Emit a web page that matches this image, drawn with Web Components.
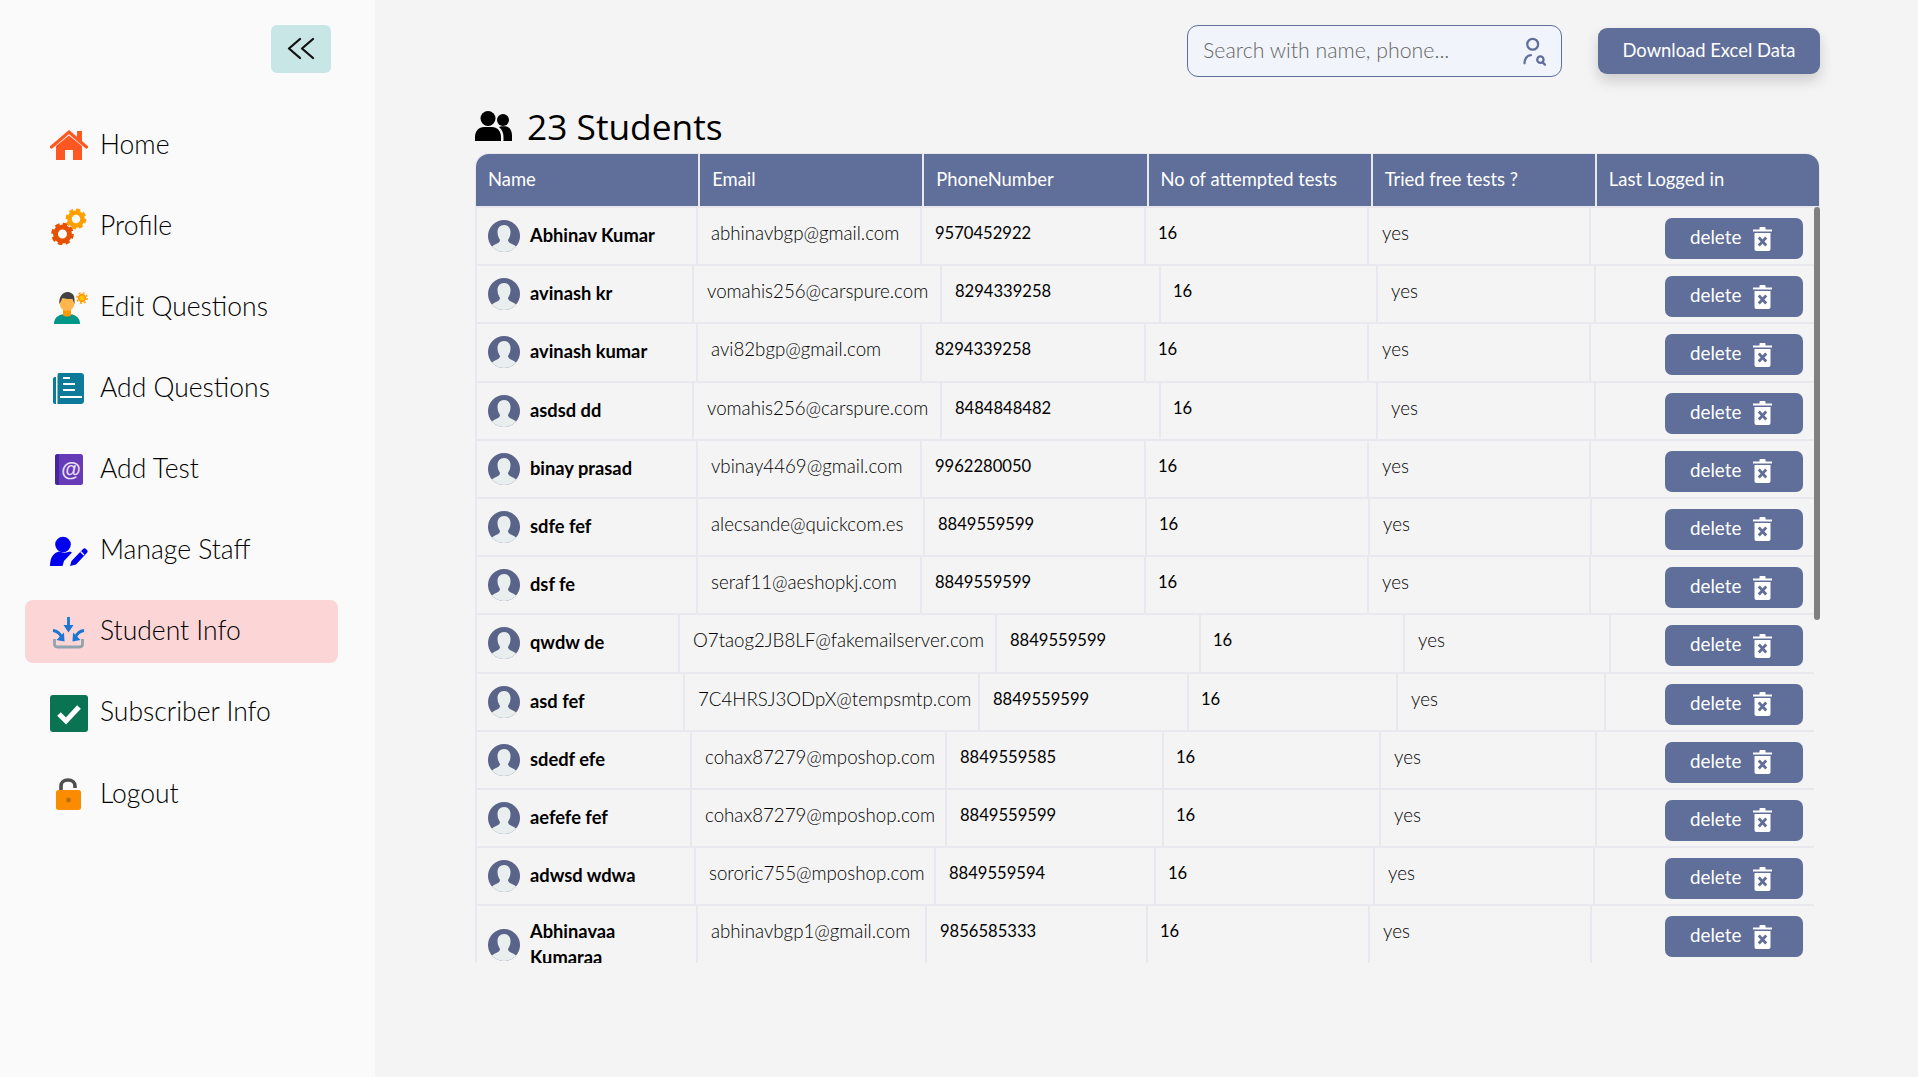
<!DOCTYPE html>
<html lang="en">
<head>
<meta charset="utf-8">
<title>Student Info</title>
<style>
    html, body { margin: 0; height: 100%; }
    body { font-family: "Lato", "Open Sans", sans-serif; background: #f4f4f4; overflow: hidden; }
</style>
</head>
<body>
<admin-app></admin-app>
<script>
const ICONS = {
    home: `<path fill="#ff5722" d="M6 20 19 9.500 32 20v14H23V24H15V34H6z"/><path fill="#ff5722" d="M27 5h5v12l-5-4z"/><path fill="none" stroke="#ff5722" stroke-width="3.200" stroke-linecap="round" d="M1.500 21 19 6 36.500 21"/>`,
    gears: `<g fill="none"><circle cx="26" cy="12" r="6.500" stroke="#ffa000" stroke-width="4.500"/><circle cx="26" cy="12" r="9.200" stroke="#ffa000" stroke-width="2.400" stroke-dasharray="4.200 3"/><circle cx="12.500" cy="27" r="7" stroke="#e65100" stroke-width="5"/><circle cx="12.500" cy="27" r="10" stroke="#e65100" stroke-width="2.600" stroke-dasharray="4.600 3.250"/></g>`,
    person: `<path fill="#009688" d="M4 36c0-7 5-10 13-10s13 3 13 10z"/><path fill="#ff9800" d="M13 20h8v7c-1 2-7 2-8 0z"/><ellipse cx="17" cy="15" rx="7.500" ry="8" fill="#ffb74d"/><path fill="#424242" d="M9.500 16c-1-7 3-12 8-12 3 0 7 2 7 7v5l-2-5c-3 0-7 0-10-1z"/><circle cx="32" cy="10" r="3.400" fill="#ffc107" stroke="#ff9800" stroke-width="1.600"/><circle cx="32" cy="10" r="5.200" fill="none" stroke="#ff9800" stroke-width="1.400" stroke-dasharray="2 2.080"/>`,
    book: `<path fill="#0e7a9a" d="M6 8v27H5c-1.200 0-2-.8-2-2V10c0-1.200.8-2 1.800-2zM9 4h22c1.800 0 3 1.200 3 3v25c0 1.800-1.200 3-3 3H7.500V7C7.500 5 8 4 9 4z"/><path stroke="#fff" stroke-width="2" d="M13 9h7M13 15h12M13 21h12M10 28h22"/>`,
    mail: `<rect x="5" y="4" width="28" height="31" rx="2.500" fill="#673ab7"/><path fill="#4527a0" d="M5 6.500C5 5 6 4 9 4v31c-3 0-4-1-4-2.500z"/><text x="21" y="26" font-family="Liberation Sans, sans-serif" font-size="20" font-weight="700" fill="#e8e0f5" text-anchor="middle">@</text>`,
    staff: `<g fill="#0000ee"><circle cx="13" cy="13.500" r="7.800"/><path d="M0 35c0-8 3-13 9-14.500 4 1.500 7 1.500 11 0l2 1-8 8.500-1.500 5z"/><path d="M20 35l1.500-5 11.500-12c1-1 2-1 3 0l1 1c1 1 .8 2-.2 3L26 33.500z"/></g><path d="M30.500 20.500l3.500 3.500" stroke="#fafafa" stroke-width="1.200"/>`,
    inbox: `<path fill="none" stroke="#90a4ae" stroke-width="2.800" stroke-linejoin="round" d="M4.500 26v5c0 2 1 3 3 3h22c2 0 3-1 3-3v-5"/><g fill="none" stroke="#1976d2" stroke-width="2.800"><path d="M18.500 4v12M3 17.500c4 .5 7 2.500 9 7.500M34 17.500c-4 .5-7 2.500-9 7.500"/></g><g fill="#1976d2"><path d="M13.500 12h10l-5 7.500z"/><path d="M14.500 28.500 14 19.500 6.500 27z"/><path d="M22.500 28.500 23 19.500 30.500 27z"/></g>`,
    check: `<rect y="1" width="38" height="37" rx="3" fill="#0a7352"/><path fill="none" stroke="#fff" stroke-width="5" d="M9 20l7 7 13-14"/>`,
    lock: `<path fill="none" stroke="#4e4e4e" stroke-width="3.600" d="M11 17V11c0-3.500 3-6 7-6s7 2.500 7 6v2"/><rect x="6" y="15" width="25" height="20" rx="2.500" fill="#fb8c00"/><circle cx="18.500" cy="25" r="2.200" fill="#b86a10"/>`
};

class NavItem extends HTMLElement {
    constructor() {
        super();
        this.shadowDOM = this.attachShadow({mode: 'open'});
    }
    connectedCallback() {
        const active = this.hasAttribute('active');
        this.shadowDOM.innerHTML = `
            <style>
            :host { display: block; }
            .item {
                display: flex;
                align-items: center;
                gap: 12px;
                height: 63px;
                padding-left: 25px;
                border-radius: 8px;
                background: ${active ? '#fcd6d6' : 'transparent'};
                font-size: 26.500px;
                font-weight: 300;
                color: #000;
                cursor: pointer;
            }
            svg { width: 38px; height: 38px; flex: none; }
            span { padding-bottom: 2.400px; }
            </style>
            <div class="item">
                <svg viewBox="0 0 38 38">${ICONS[this.getAttribute('icon')]}</svg>
                <span><slot></slot></span>
            </div>`;
    }
}

class SideBar extends HTMLElement {
    constructor() {
        super();
        this.shadowDOM = this.attachShadow({mode: 'open'});
    }
    connectedCallback() {
        this.shadowDOM.innerHTML = `
            <style>
            :host {
                display: block;
                flex: none;
                width: 375px;
                height: 100%;
                box-sizing: border-box;
                padding: 25px 37px 0 25px;
                background: #fafafa;
            }
            .collapse {
                display: flex;
                align-items: center;
                justify-content: center;
                width: 60px;
                height: 48px;
                margin-left: 246px;
                border-radius: 6px;
                background: #c8e6e5;
            }
            nav {
                display: flex;
                flex-direction: column;
                gap: 18.100px;
                margin-top: 40.500px;
            }
            </style>
            <div class="collapse">
                <svg width="28" height="24" viewBox="0 0 28 24" fill="none" stroke="#111" stroke-width="2.300" stroke-linecap="round" stroke-linejoin="round"><path d="M13 2 2 11.500 13 21M26 2 15 11.500 26 21"/></svg>
            </div>
            <nav><slot></slot></nav>`;
    }
}

class SearchBox extends HTMLElement {
    constructor() {
        super();
        this.shadowDOM = this.attachShadow({mode: 'open'});
    }
    connectedCallback() {
        this.shadowDOM.innerHTML = `
            <style>
            :host {
                display: flex;
                align-items: center;
                justify-content: space-between;
                box-sizing: border-box;
                width: 375px;
                height: 52px;
                padding: 0 14px 0 15px;
                border: 1.500px solid #5f6f9a;
                border-radius: 11px;
                background: #f1f5fb;
                font-size: 21.300px;
                font-weight: 300;
                color: #666;
            }
            span { padding-bottom: 3px; }
            </style>
            <span><slot></slot></span>
            <svg width="25" height="29" viewBox="0 0 26 32" fill="none" stroke="#5f6f9a" stroke-width="2.500" stroke-linecap="round">
                <circle cx="11" cy="8" r="6"/>
                <path d="M2 29c0-5 3-9 7-9"/>
                <circle cx="19.500" cy="25" r="3.500"/>
                <path d="M22 28l2.500 2.500"/>
            </svg>`;
    }
}

class ExcelButton extends HTMLElement {
    constructor() {
        super();
        this.shadowDOM = this.attachShadow({mode: 'open'});
    }
    connectedCallback() {
        this.shadowDOM.innerHTML = `
            <style>
            :host {
                display: flex;
                align-items: center;
                justify-content: center;
                box-sizing: border-box;
                width: 222px;
                height: 46px;
                padding-bottom: 2px;
                border-radius: 9px;
                background: #5f6f9a;
                box-shadow: 0 7px 14px rgba(0, 0, 0, .16);
                color: #fff;
                font-size: 18.400px;
                cursor: pointer;
            }
            </style>
            <slot></slot>`;
    }
}

class DeleteButton extends HTMLElement {
    constructor() {
        super();
        this.shadowDOM = this.attachShadow({mode: 'open'});
    }
    connectedCallback() {
        this.shadowDOM.innerHTML = `
            <style>
            :host {
                display: flex;
                align-items: center;
                gap: 12px;
                box-sizing: border-box;
                width: 138px;
                height: 41px;
                padding-left: 25px;
                border-radius: 7px;
                background: #5f6f9a;
                color: #fff;
                font-size: 18.800px;
                font-weight: 400;
                cursor: pointer;
            }
            span { padding-bottom: 3px; }
            </style>
            <span>delete</span>
            <svg width="19" height="24" viewBox="0 0 19 24">
                <path fill="#fff" d="M0 2.500h6.500V1c0-.6.4-1 1-1h4c.6 0 1 .4 1 1v1.500H19V4.500H0zM1.500 6h16v16c0 1.200-.8 2-2 2h-12c-1.200 0-2-.8-2-2z"/>
                <path stroke="#5f6f9a" stroke-width="2.800" d="M5.800 10.500l7.400 8M13.200 10.500l-7.400 8"/>
            </svg>`;
    }
}

class UserAvatar extends HTMLElement {
    constructor() {
        super();
        this.shadowDOM = this.attachShadow({mode: 'open'});
    }
    connectedCallback() {
        this.shadowDOM.innerHTML = `
            <style>:host { display: block; width: 32px; height: 32px; flex: none; }</style>
            <svg width="32" height="32" viewBox="0 0 32 32">
                <clipPath id="c"><circle cx="16" cy="16" r="16"/></clipPath>
                <g clip-path="url(#c)">
                    <rect width="32" height="32" fill="#5a6488"/>
                    <path fill="#e9eeee" d="M16 5c4 0 6.500 3 6.500 7 0 4-1.500 6-2.500 8 0 2 2 3.500 6 5l4 3-4 4H6l-4-4 4-3c4-1.500 6-3 6-5-1-2-2.500-4-2.500-8 0-4 2.500-7 6.500-7z"/>
                </g>
            </svg>`;
    }
}

class StudentRow extends HTMLElement {
    constructor() {
        super();
        this.shadowDOM = this.attachShadow({mode: 'open'});
    }
    connectedCallback() {
        const widths = this.getAttribute('widths');
        const value = (name) => this.getAttribute(name);
        this.shadowDOM.innerHTML = `
            <style>
            :host {
                display: grid;
                grid-template-columns: ${widths} 1fr;
                min-height: 58.200px;
                box-sizing: border-box;
                border-left: 2px solid #e8e8ee;
                border-bottom: 2px solid #e8e8ee;
                font-size: 18.700px;
                font-weight: 300;
                color: #000;
            }
            .cell {
                box-sizing: border-box;
                padding: 13px 0 0 13px;
                border-right: 2px solid #e8e8ee;
                line-height: 24px;
                white-space: nowrap;
            }
            .name {
                display: flex;
                align-items: center;
                gap: 10px;
                padding: 0 0 0 11px;
                font-weight: 700;
                font-size: 18.300px;
                line-height: 26px;
                white-space: normal;
            }
            .name span { max-width: 130px; padding: 12px 0 14px; }
            .num { font-weight: 400; font-size: 16.600px; }
            .tries { padding-left: 12px; }
            .action {
                display: flex;
                justify-content: flex-end;
                padding: 10px 11px 0 0;
                border-right: 0;
            }
            </style>
            <div class="cell name"><user-avatar></user-avatar><span>${value('name')}</span></div>
            <div class="cell">${value('email')}</div>
            <div class="cell num">${value('phone')}</div>
            <div class="cell num tries">16</div>
            <div class="cell">yes</div>
            <div class="cell action"><delete-button></delete-button></div>`;
    }
}

class StudentTable extends HTMLElement {
    constructor() {
        super();
        this.shadowDOM = this.attachShadow({mode: 'open'});
    }
    connectedCallback() {
        const heads = ['Name', 'Email', 'PhoneNumber', 'No of attempted tests', 'Tried free tests ?', 'Last Logged in'];
        this.shadowDOM.innerHTML = `
            <style>
            :host { display: block; position: relative; }
            .head {
                display: grid;
                grid-template-columns: repeat(6, 1fr);
                gap: 2px;
                height: 52px;
                border-radius: 14px 14px 0 0;
                overflow: hidden;
                font-size: 18.400px;
                color: #fff;
                border: 1px solid #e8e8ee;
                border-bottom: 2px solid #e8e8ee;
                background: #e8e8ee;
            }
            .head div {
                display: flex;
                align-items: center;
                padding: 0 0 2px 12px;
                background: #5f6f9a;
            }
            .rows {
                height: 755px;
                margin-right: 6px;
                overflow: hidden;
            }
            .thumb {
                position: absolute;
                top: 54px;
                right: 0;
                width: 6px;
                height: 413px;
                border-radius: 3px;
                background: #808080;
            }
            </style>
            <div class="head">${heads.map((h) => `<div>${h}</div>`).join('')}</div>
            <div class="rows"><slot></slot></div>
            <div class="thumb"></div>`;
    }
}

class AdminApp extends HTMLElement {
    constructor() {
        super();
        this.shadowDOM = this.attachShadow({mode: 'open'});
    }
    connectedCallback() {
        const a = '221px 224px 224px 223px 222px';
        const b = '217px 248px 219px 217px 218px';
        const students = [
            ['Abhinav Kumar', 'abhinavbgp@gmail.com', '9570452922', a],
            ['avinash kr', 'vomahis256@carspure.com', '8294339258', b],
            ['avinash kumar', 'avi82bgp@gmail.com', '8294339258', a],
            ['asdsd dd', 'vomahis256@carspure.com', '8484848482', b],
            ['binay prasad', 'vbinay4469@gmail.com', '9962280050', a],
            ['sdfe fef', 'alecsande@quickcom.es', '8849559599', '221px 227px 222px 223px 222px'],
            ['dsf fe', 'seraf11@aeshopkj.com', '8849559599', a],
            ['qwdw de', 'O7taog2JB8LF@fakemailserver.com', '8849559599', '203px 317px 204px 204px 206px'],
            ['asd fef', '7C4HRSJ3ODpX@tempsmtp.com', '8849559599', '208px 295px 209px 209px 208px'],
            ['sdedf efe', 'cohax87279@mposhop.com', '8849559585', '215px 255px 217px 217px 216px'],
            ['aefefe fef', 'cohax87279@mposhop.com', '8849559599', '215px 255px 217px 217px 216px'],
            ['adwsd wdwa', 'sororic755@mposhop.com', '8849559594', '219px 240px 220px 219px 220px'],
            ['Abhinavaa Kumaraa', 'abhinavbgp1@gmail.com', '9856585333', '221px 229px 221px 222px 222px']
        ];
        const nav = [
            ['home', 'Home'], ['gears', 'Profile'], ['person', 'Edit Questions'],
            ['book', 'Add Questions'], ['mail', 'Add Test'], ['staff', 'Manage Staff'],
            ['inbox', 'Student Info'], ['check', 'Subscriber Info'], ['lock', 'Logout']
        ];
        this.shadowDOM.innerHTML = `
            <style>
            :host { display: flex; height: 1077px; overflow: hidden; }
            main {
                flex: 1;
                box-sizing: border-box;
                padding: 25px 98px 0 100px;
                background: #f4f4f4;
            }
            .top {
                display: flex;
                align-items: center;
                justify-content: flex-end;
                gap: 36px;
            }
            h1 {
                display: flex;
                align-items: center;
                gap: 15px;
                height: 76px;
                margin: 0;
                padding-top: 21px;
                box-sizing: border-box;
                font: 400 35.300px "Open Sans", sans-serif;
                color: #000;
            }
            </style>
            <side-bar>
                ${nav.map(([icon, label]) => `<nav-item icon="${icon}" ${label === 'Student Info' ? 'active' : ''}>${label}</nav-item>`).join('')}
            </side-bar>
            <main>
                <div class="top">
                    <search-box>Search with name, phone...</search-box>
                    <excel-button>Download Excel Data</excel-button>
                </div>
                <h1>
                    <svg width="37" height="30" viewBox="0 0 37 30" fill="#000">
                        <circle cx="13" cy="7.500" r="7.500"/>
                        <path d="M0 30v-4c0-6 4-10 9-10h8c5 0 9 4 9 10v4z"/>
                        <circle cx="28" cy="9" r="6"/>
                        <path d="M28.500 30v-4c0-4-1.500-7.500-4.500-10 1-.5 2-.8 3-.8h3c4 0 7 4 7 9V30z"/>
                    </svg>
                    23 Students
                </h1>
                <student-table>
                    ${students.map((s) => `<student-row name="${s[0]}" email="${s[1]}" phone="${s[2]}" widths="${s[3]}"></student-row>`).join('')}
                </student-table>
            </main>`;
    }
}

customElements.define('nav-item', NavItem);
customElements.define('side-bar', SideBar);
customElements.define('search-box', SearchBox);
customElements.define('excel-button', ExcelButton);
customElements.define('delete-button', DeleteButton);
customElements.define('user-avatar', UserAvatar);
customElements.define('student-row', StudentRow);
customElements.define('student-table', StudentTable);
customElements.define('admin-app', AdminApp);
</script>
</body>
</html>
